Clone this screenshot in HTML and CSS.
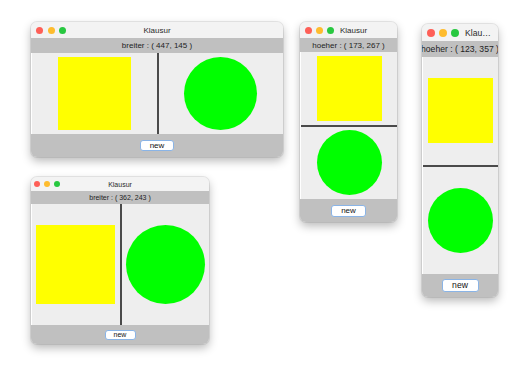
FILE: index.html
```html
<!DOCTYPE html>
<html lang="en">
<head>
    <meta charset="UTF-8">
    <meta name="viewport" content="width=device-width, initial-scale=1.0">
    <title>Klausur</title>
    <link rel="stylesheet" href="styles.css">
</head>
<body>
    <div class="desktop">
        <!-- wide window, panes side by side -->
        <div class="win win-a">
            <div class="titlebar">
                <div class="lights"><span class="light red"></span><span class="light amber"></span><span class="light green"></span></div>
                <div class="title">Klausur</div>
            </div>
            <div class="status"><span>breiter : ( 447, 145 )</span></div>
            <div class="panes row">
                <div class="pane"><div class="shape square"></div></div>
                <div class="divider"></div>
                <div class="pane"><div class="shape circle"></div></div>
            </div>
            <div class="actions"><button class="btn">new</button></div>
        </div>

        <div class="win win-b">
            <div class="titlebar">
                <div class="lights"><span class="light red"></span><span class="light amber"></span><span class="light green"></span></div>
                <div class="title">Klausur</div>
            </div>
            <div class="status"><span>hoeher : ( 173, 267 )</span></div>
            <div class="panes col">
                <div class="pane"><div class="shape square"></div></div>
                <div class="divider"></div>
                <div class="pane"><div class="shape circle"></div></div>
            </div>
            <div class="actions"><button class="btn">new</button></div>
        </div>

        <div class="win win-c">
            <div class="titlebar">
                <div class="lights"><span class="light red"></span><span class="light amber"></span><span class="light green"></span></div>
                <div class="title">Klausur</div>
            </div>
            <div class="status"><span>hoeher : ( 123, 357 )</span></div>
            <div class="panes col">
                <div class="pane"><div class="shape square"></div></div>
                <div class="divider"></div>
                <div class="pane"><div class="shape circle"></div></div>
            </div>
            <div class="actions"><button class="btn">new</button></div>
        </div>

        <div class="win win-d">
            <div class="titlebar">
                <div class="lights"><span class="light red"></span><span class="light amber"></span><span class="light green"></span></div>
                <div class="title">Klausur</div>
            </div>
            <div class="status"><span>breiter : ( 362, 243 )</span></div>
            <div class="panes row">
                <div class="pane"><div class="shape square"></div></div>
                <div class="divider"></div>
                <div class="pane"><div class="shape circle"></div></div>
            </div>
            <div class="actions"><button class="btn">new</button></div>
        </div>
    </div>
</body>
</html>
```

FILE: styles.css
```css
body {
    margin: 0;
    background: #ffffff;
    font-family: "Liberation Sans", Arial, sans-serif;
}
.desktop {
    position: relative;
    width: 531px;
    height: 382px;
}

/* window frame */
.win {
    position: absolute;
    display: flex;
    flex-direction: column;
    background: #eeeeee;
    border-radius: 6px;
    overflow: hidden;
    box-shadow: 0 4px 10px rgba(0,0,0,0.28), 0 0 0 1px rgba(0,0,0,0.08);
}
.win-a { left: 31px; top: 22px; width: 252px; height: 135px; --title: 16px; --status: 15px; --bar: 23px; --shape: 73px; --dot: 7px; --gap: 4.5px; --pad: 5px; --fs: 8px; --btn-w: 34px; --btn-h: 11px; }
.win-b { left: 300px; top: 22px; width: 97px; height: 200px; --title: 16px; --status: 14px; --bar: 23px; --shape: 65px; --dot: 7px; --gap: 4px; --pad: 5px; --fs: 8px; --btn-w: 35px; --btn-h: 12px; }
.win-c { left: 422px; top: 24px; width: 76px; height: 273px; --title: 17px; --status: 16px; --bar: 23px; --shape: 65px; --dot: 8px; --gap: 4px; --pad: 5px; --fs: 8.6px; --btn-w: 37px; --btn-h: 13px; }
.win-d { left: 31px; top: 177px; width: 178px; height: 167px; --title: 14px; --status: 13px; --bar: 19px; --shape: 79px; --dot: 6px; --gap: 4px; --pad: 3px; --fs: 7px; --btn-w: 31px; --btn-h: 10px; }

.titlebar {
    height: var(--title);
    flex: none;
    display: flex;
    align-items: center;
    position: relative;
    background: #f3f3f3;
    padding-left: var(--pad);
}
.lights {
    display: flex;
    gap: var(--gap);
    flex: none;
}
.light {
    width: var(--dot);
    height: var(--dot);
    border-radius: 50%;
}
.red { background: #fe5f57; }
.amber { background: #febc2e; }
.green { background: #28c840; }

.title {
    position: absolute;
    left: 0;
    right: 0;
    text-align: center;
    font-size: var(--fs);
    color: #2a2a2a;
}
.win-b .title,
.win-c .title {
    position: static;
    text-align: left;
    margin-left: 6px;
    white-space: nowrap;
    overflow: hidden;
    text-overflow: ellipsis;
    padding-right: 8px;
}
.win-c .title { padding-right: 6px; }

.status {
    height: var(--status);
    flex: none;
    display: flex;
    align-items: center;
    justify-content: center;
    overflow: hidden;
    white-space: nowrap;
    background: #c0c0c0;
    font-size: var(--fs);
    color: #1e1e1e;
}
.status span { flex: none; }

.panes {
    flex: 1;
    display: flex;
    min-height: 0;
    border-left: 1px solid #ffffff;
}
.panes.row { flex-direction: row; }
.panes.col { flex-direction: column; }
.pane {
    flex: 1;
    display: flex;
    align-items: center;
    justify-content: center;
    background: #eeeeee;
}
.divider {
    flex: none;
    background: #4a4a4a;
}
.row .divider { width: 2px; }
.col .divider { height: 2px; }

.shape {
    width: var(--shape);
    height: var(--shape);
}
.square { background: #ffff00; }
.circle { background: #00ff00; border-radius: 50%; }

.actions {
    height: var(--bar);
    flex: none;
    display: flex;
    align-items: center;
    justify-content: center;
    background: #c0c0c0;
}
.btn {
    width: var(--btn-w);
    height: var(--btn-h);
    padding: 0;
    border: 1px solid #8ab4e6;
    border-radius: 3px;
    background: #ffffff;
    font-family: "Liberation Sans", Arial, sans-serif;
    font-size: var(--fs);
    line-height: 1;
    color: #111111;
}
```
